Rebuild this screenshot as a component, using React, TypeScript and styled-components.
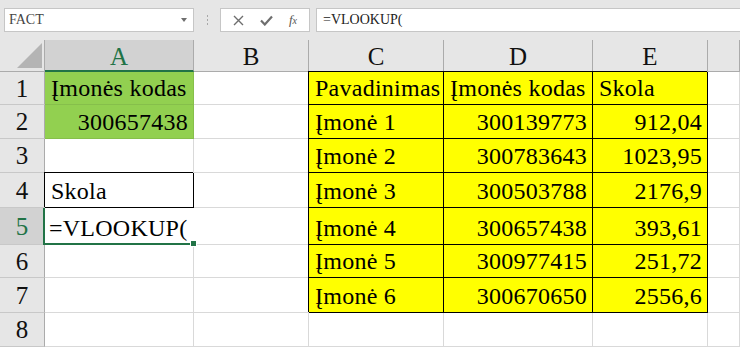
import React, { FC } from 'react';
import styled, { createGlobalStyle } from 'styled-components';

// Local Typings
type Align = 'left' | 'right';
type Fill = 'none' | 'green' | 'yellow';

interface CellData {
  text?: string;
  align?: Align;
  fill?: Fill;
  boxed?: boolean;
}

// Local Variables
const SERIF = '"Liberation Serif", "Times New Roman", serif';
const GRID = '#d9d9d9';
const HEAD_LINE = '#ababab';
const SELECT = '#217346';

const columns = ['A', 'B', 'C', 'D', 'E', ''];
const rowHeights = [33, 34, 34, 35, 37, 33, 35, 34];

const yellowRows: CellData[][] = [
  [{ text: 'Pavadinimas' }, { text: 'Įmonės kodas' }, { text: 'Skola' }],
  [{ text: 'Įmonė 1' }, { text: '300139773', align: 'right' }, { text: '912,04', align: 'right' }],
  [{ text: 'Įmonė 2' }, { text: '300783643', align: 'right' }, { text: '1023,95', align: 'right' }],
  [{ text: 'Įmonė 3' }, { text: '300503788', align: 'right' }, { text: '2176,9', align: 'right' }],
  [{ text: 'Įmonė 4' }, { text: '300657438', align: 'right' }, { text: '393,61', align: 'right' }],
  [{ text: 'Įmonė 5' }, { text: '300977415', align: 'right' }, { text: '251,72', align: 'right' }],
  [{ text: 'Įmonė 6' }, { text: '300670650', align: 'right' }, { text: '2556,6', align: 'right' }],
];

const columnA: CellData[] = [
  { text: 'Įmonės kodas', fill: 'green' },
  { text: '300657438', align: 'right', fill: 'green' },
  {},
  { text: 'Skola', boxed: true },
  {},
  {},
  {},
  {},
];

const fills: Record<Fill, string> = {
  none: '#ffffff',
  green: '#92d050',
  yellow: '#ffff00',
};

const GlobalStyle = createGlobalStyle`
  html, body {
    margin: 0;
    padding: 0;
    background: #ffffff;
    overflow: hidden;
  }
  body {
    font-family: ${SERIF};
  }
`;

const Page = styled.div`
  width: 740px;
  height: 347px;
  display: flex;
  flex-direction: column;
  background: #e6e6e6;
  overflow: hidden;
`;

const Toolbar = styled.div`
  height: 40px;
  display: flex;
  align-items: flex-start;
  padding: 8px 0 0 4px;
  box-sizing: border-box;
`;

const NameBox = styled.div`
  width: 190px;
  height: 24px;
  box-sizing: border-box;
  background: #ffffff;
  border: 1px solid #c6c6c6;
  display: flex;
  align-items: center;
  justify-content: space-between;
  padding: 0 6px 0 4px;
  font-family: ${SERIF};
  font-size: 14px;
  color: #444444;
`;

const DropArrow = styled.span`
  width: 0;
  height: 0;
  border-left: 3px solid transparent;
  border-right: 3px solid transparent;
  border-top: 4px solid #6e6e6e;
`;

const Grip = styled.div`
  width: 26px;
  height: 24px;
  display: flex;
  flex-direction: column;
  align-items: center;
  justify-content: center;
  gap: 2px;

  span {
    width: 1px;
    height: 2px;
    background: #a8a8a8;
  }
`;

const FuncBox = styled.div`
  width: 90px;
  height: 24px;
  box-sizing: border-box;
  background: #ffffff;
  border: 1px solid #c6c6c6;
  display: flex;
  align-items: center;
  justify-content: space-around;
  padding: 0 4px;
  color: #6e6e6e;
`;

const FxLabel = styled.span`
  font-family: ${SERIF};
  font-style: italic;
  font-size: 13px;
  color: #555555;

  small {
    font-size: 10px;
  }
`;

const FormulaBox = styled.div`
  flex: 1;
  margin-left: 6px;
  height: 24px;
  box-sizing: border-box;
  background: #ffffff;
  border: 1px solid #c6c6c6;
  border-right: none;
  display: flex;
  align-items: center;
  padding-left: 6px;
  font-family: ${SERIF};
  font-size: 14px;
  color: #222222;
`;

const Sheet = styled.div`
  display: grid;
  grid-template-columns: 45px 149px 115px 135px 149px 115px 1fr;
  grid-template-rows: 32px ${rowHeights.map((h) => `${h}px`).join(' ')};
  background: #ffffff;
`;

const Corner = styled.div`
  background: #e6e6e6;
  border-right: 1px solid ${HEAD_LINE};
  border-bottom: 1px solid ${HEAD_LINE};
  display: flex;
  align-items: flex-end;
  justify-content: flex-end;
  padding: 0 2px 3px 0;
`;

const CornerMark = styled.span`
  width: 0;
  height: 0;
  border-left: 25px solid transparent;
  border-bottom: 25px solid #b4b4b4;
`;

const ColHead = styled.div<{ $active?: boolean }>`
  background: ${({ $active }) => ($active ? '#d2d2d2' : '#e6e6e6')};
  color: ${({ $active }) => ($active ? SELECT : '#111111')};
  border-right: 1px solid ${HEAD_LINE};
  border-bottom: ${({ $active }) => ($active ? `2px solid ${SELECT}` : `1px solid ${HEAD_LINE}`)};
  display: flex;
  align-items: center;
  justify-content: center;
  font-family: ${SERIF};
  font-size: 25px;
  line-height: 1;
  padding-top: 2px;
`;

const RowHead = styled.div<{ $active?: boolean }>`
  background: ${({ $active }) => ($active ? '#d2d2d2' : '#e6e6e6')};
  color: ${({ $active }) => ($active ? SELECT : '#111111')};
  border-right: 1px solid ${HEAD_LINE};
  border-bottom: 1px solid #c8c8c8;
  display: flex;
  align-items: center;
  justify-content: center;
  font-family: ${SERIF};
  font-size: 25px;
  line-height: 1;
`;

const Cell = styled.div<{ $align: Align; $fill: Fill; $boxed?: boolean; $line?: string }>`
  background: ${({ $fill }) => fills[$fill]};
  border-right: 1px solid ${({ $boxed, $line }) => ($boxed ? '#000000' : $line || GRID)};
  border-bottom: 1px solid ${({ $boxed, $line }) => ($boxed ? '#000000' : $line || GRID)};
  box-shadow: ${({ $boxed }) => ($boxed ? '-1px -1px 0 #000000' : 'none')};
  display: flex;
  align-items: flex-end;
  justify-content: ${({ $align }) => ($align === 'right' ? 'flex-end' : 'flex-start')};
  padding: 0 5px 4px 6px;
  font-family: ${SERIF};
  font-size: 24px;
  letter-spacing: 0.25px;
  line-height: 1;
  color: #000000;
  white-space: nowrap;
  overflow: hidden;
`;

const EditCell = styled.div`
  position: relative;
  background: #ffffff;
  border-left: 2px solid ${SELECT};
  border-bottom: 2px solid ${SELECT};
  margin-left: -2px;
  display: flex;
  align-items: flex-end;
  padding: 0 0 3px 4px;
  font-family: ${SERIF};
  font-size: 24px;
  letter-spacing: 0.25px;
  line-height: 1;
  color: #000000;
  white-space: nowrap;
`;

const FillHandle = styled.span`
  position: absolute;
  right: -3px;
  bottom: -4px;
  width: 5px;
  height: 5px;
  background: ${SELECT};
  border: 1px solid #ffffff;
`;

// Component Definition
const App: FC = () => {
  const renderRow = (rowIndex: number) => {
    const rowNo = rowIndex + 1;
    const a = columnA[rowIndex];
    const yellow = yellowRows[rowIndex];
    const isActive = rowNo === 5;

    return (
      <React.Fragment key={rowNo}>
        <RowHead $active={isActive}>{rowNo}</RowHead>

        {isActive ? (
          <EditCell>
            =VLOOKUP(
            <FillHandle />
          </EditCell>
        ) : (
          <Cell
            $align={a.align || 'left'}
            $boxed={a.boxed}
            $fill={a.fill || 'none'}
            $line={a.fill === 'green' ? '#86bf4b' : undefined}
          >
            {a.text}
          </Cell>
        )}

        <Cell $align="left" $fill="none" />

        {[0, 1, 2].map((col) => {
          const data = yellow ? yellow[col] : undefined;
          return (
            <Cell
              key={col}
              $align={data?.align || 'left'}
              $boxed={!!yellow}
              $fill={yellow ? 'yellow' : 'none'}
            >
              {data?.text}
            </Cell>
          );
        })}

        <Cell $align="left" $fill="none" />
      </React.Fragment>
    );
  };

  return (
    <Page>
      <GlobalStyle />

      <Toolbar>
        <NameBox>
          FACT
          <DropArrow />
        </NameBox>

        <Grip>
          <span />
          <span />
          <span />
        </Grip>

        <FuncBox>
          <svg width="11" height="11" viewBox="0 0 11 11">
            <path d="M1 1 L10 10 M10 1 L1 10" stroke="#6e6e6e" strokeWidth="1.4" />
          </svg>
          <svg width="13" height="11" viewBox="0 0 13 11">
            <path d="M1 5.5 L4.8 9.5 L12 1.5" stroke="#6e6e6e" strokeWidth="2.2" fill="none" />
          </svg>
          <FxLabel>
            f
            <small>x</small>
          </FxLabel>
        </FuncBox>

        <FormulaBox>=VLOOKUP(</FormulaBox>
      </Toolbar>

      <Sheet>
        <Corner>
          <CornerMark />
        </Corner>
        {columns.map((col) => (
          <ColHead key={col || 'F'} $active={col === 'A'}>
            {col}
          </ColHead>
        ))}

        {rowHeights.map((_h, i) => renderRow(i))}
      </Sheet>
    </Page>
  );
};

export default App;
